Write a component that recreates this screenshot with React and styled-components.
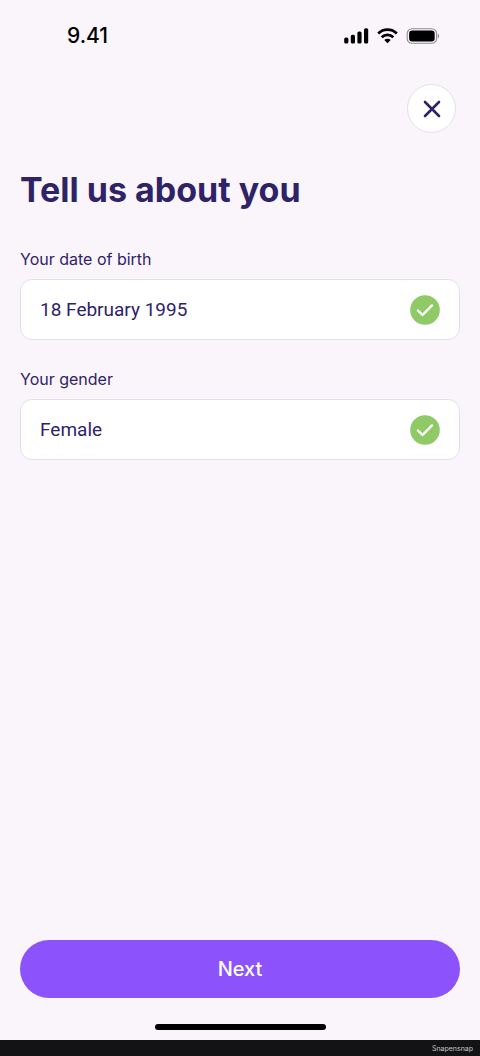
import React from 'react';
import styled, { createGlobalStyle } from 'styled-components';

const GlobalStyle = createGlobalStyle`
  * { box-sizing: border-box; }
  body {
    margin: 0;
    background-color: #f9f5fb;
    color: #2f2368;
    font-family: Inter, "Liberation Sans", sans-serif;
  }
  button { font-family: inherit; }
`;

const Screen = {
  Body: styled.div`
    display: flex;
    flex-direction: column;
    min-height: 100vh;
`,

  Content: styled.form`
    flex-grow: 1;
    display: flex;
    flex-direction: column;
    padding: 0 20px;
`,

  Title: styled.h1`
    margin: 35px 0;
    font-size: 34px;
    line-height: 44px;
    font-weight: 700;
`,

  Fields: styled.div`
    flex-grow: 1;
    display: flex;
    flex-direction: column;
    gap: 27px;
`,
};

const StatusBar = {
  Body: styled.header`
    display: flex;
    align-items: center;
    justify-content: space-between;
    height: 72px;
    padding: 0 40px 0 67px;
    color: #000;
`,

  Time: styled.span`
    font-size: 21px;
    line-height: 24px;
    font-weight: 500;
`,

  Icons: styled.div`
    display: flex;
    align-items: center;
    gap: 8px;
`,
};

const Toolbar = styled.nav`
  display: flex;
  justify-content: flex-end;
  padding: 12px 4px 0;
`;

const CloseButton = styled.button`
  display: flex;
  align-items: center;
  justify-content: center;
  width: 49px;
  height: 49px;
  padding: 0;
  border: 1px solid #e4dfea;
  border-radius: 50%;
  background-color: #fff;
  color: #2f2368;
  cursor: pointer;
`;

const Field = {
  Body: styled.div`
    display: flex;
    flex-direction: column;
    gap: 8px;
`,

  Label: styled.label`
    font-size: 16px;
    line-height: 24px;
`,

  Box: styled.div`
    display: flex;
    align-items: center;
    height: 61px;
    padding: 0 19px;
    border: 1px solid #e4dfea;
    border-radius: 12px;
    background-color: #fff;
`,

  Control: styled.input`
    appearance: none;
    flex-grow: 1;
    min-width: 0;
    height: 100%;
    padding: 0;
    border: 0;
    outline: 0;
    background: transparent;
    color: #2f2368;
    font-family: Roboto, "Liberation Sans", sans-serif;
    font-size: 19px;
`,
};

const NextButton = styled.button`
  height: 58px;
  border: 0;
  border-radius: 29px;
  background-color: #8c52fb;
  color: #fff;
  font-size: 20px;
  font-weight: 500;
  cursor: pointer;
`;

const HomeIndicator = styled.div`
  align-self: center;
  width: 171px;
  height: 6px;
  margin: 26px 0 10px;
  border-radius: 3px;
  background-color: #000;
`;

const Footer = styled.footer`
  height: 16px;
  padding: 0 7px;
  background-color: #131315;
  color: #c4c4c6;
  font-size: 7px;
  line-height: 18px;
  text-align: right;
`;

const SignalIcon = () => (
  <svg width="25" height="16" viewBox="0 0 25 16" fill="currentColor" aria-hidden="true">
    <rect x="0.2" y="9.5" width="4.2" height="6" rx="1.6" />
    <rect x="6.8" y="6.8" width="4.2" height="8.7" rx="1.6" />
    <rect x="13.4" y="3.5" width="4.2" height="12" rx="1.6" />
    <rect x="20" y="0.2" width="4.2" height="15.3" rx="1.6" />
  </svg>
);

const WifiIcon = () => (
  <svg width="21" height="16" viewBox="0 0 21 16" fill="none" stroke="currentColor" strokeWidth="2.7" aria-hidden="true">
    <path d="M1.2 5.5a13.2 13.2 0 0 1 18.6 0" />
    <path d="M4.7 9.2a8.2 8.2 0 0 1 11.6 0" />
    <path d="M10.5 15.2L7.3 12a4.5 4.5 0 0 1 6.4 0z" fill="currentColor" stroke="none" />
  </svg>
);

const BatteryIcon = () => (
  <svg width="34" height="16" viewBox="0 0 34 16" aria-hidden="true">
    <rect x="1.2" y="0.7" width="29.4" height="14.6" rx="4.8" fill="none" stroke="#8e8c91" strokeWidth="1.1" />
    <rect x="3.1" y="2.6" width="25.6" height="10.8" rx="3.2" fill="currentColor" />
    <path d="M31.9 5.7c1.6.7 1.6 4 0 4.7z" fill="#8e8c91" />
  </svg>
);

const CloseIcon = () => (
  <svg width="18" height="18" viewBox="0 0 18 18" stroke="currentColor" strokeWidth="2.6" strokeLinecap="round" aria-hidden="true">
    <path d="M2 2L16 16M16 2L2 16" />
  </svg>
);

const CheckIcon = () => (
  <svg width="30" height="30" viewBox="0 0 30 30" fill="none" aria-hidden="true">
    <circle cx="15" cy="15" r="14.8" fill="#8fca67" />
    <path d="M8 15.6L12.6 20L22 10.4" stroke="#fff" strokeWidth="2.4" strokeLinecap="round" strokeLinejoin="round" />
  </svg>
);

export default function App() {
  const [birthDate, setBirthDate] = React.useState('18 February 1995');
  const [gender, setGender] = React.useState('Female');

  return (
    <Screen.Body>
      <GlobalStyle />
      <StatusBar.Body>
        <StatusBar.Time>9.41</StatusBar.Time>
        <StatusBar.Icons>
          <SignalIcon />
          <WifiIcon />
          <BatteryIcon />
        </StatusBar.Icons>
      </StatusBar.Body>
      <Screen.Content onSubmit={(event) => event.preventDefault()}>
        <Toolbar>
          <CloseButton type="button" aria-label="Close">
            <CloseIcon />
          </CloseButton>
        </Toolbar>
        <Screen.Title>Tell us about you</Screen.Title>
        <Screen.Fields>
          <Field.Body>
            <Field.Label htmlFor="birthDate">Your date of birth</Field.Label>
            <Field.Box>
              <Field.Control
                id="birthDate"
                type="text"
                value={birthDate}
                onChange={(event) => setBirthDate(event.target.value)}
              />
              {birthDate && <CheckIcon />}
            </Field.Box>
          </Field.Body>
          <Field.Body>
            <Field.Label htmlFor="gender">Your gender</Field.Label>
            <Field.Box>
              <Field.Control
                id="gender"
                type="text"
                value={gender}
                onChange={(event) => setGender(event.target.value)}
              />
              {gender && <CheckIcon />}
            </Field.Box>
          </Field.Body>
        </Screen.Fields>
        <NextButton type="submit">Next</NextButton>
      </Screen.Content>
      <HomeIndicator />
      <Footer>Snapensnap</Footer>
    </Screen.Body>
  );
}
